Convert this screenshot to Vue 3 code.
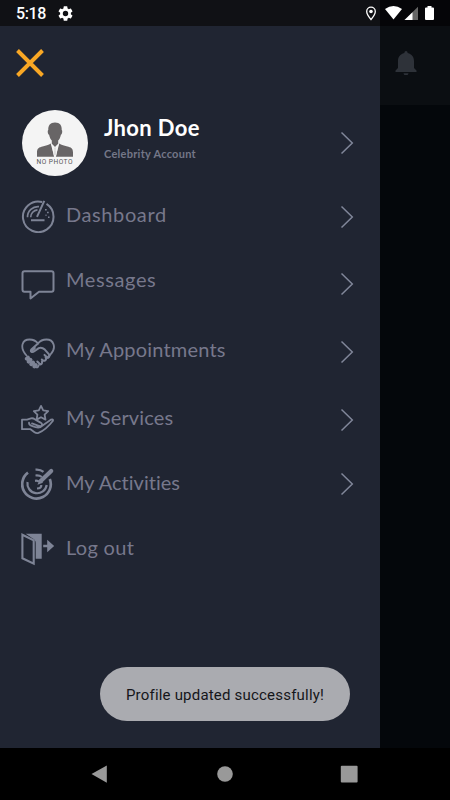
<script setup>
const items = [
  { id: 'dashboard', label: 'Dashboard' },
  { id: 'messages', label: 'Messages' },
  { id: 'appointments', label: 'My Appointments' },
  { id: 'services', label: 'My Services' },
  { id: 'activities', label: 'My Activities' },
  { id: 'logout', label: 'Log out' }
]
</script>

<template>
  <div class="screen">
    <header class="status">
      <div class="status-left">
        <span class="time">5:18</span>
        <svg class="gear" viewBox="2 2 20 20"><path fill="#fff" fill-rule="evenodd" d="M19.14 12.94c.04-.3.06-.61.06-.94s-.02-.64-.07-.94l2.03-1.58a.49.49 0 0 0 .12-.61l-1.92-3.32a.49.49 0 0 0-.59-.22l-2.39.96a7 7 0 0 0-1.62-.94l-.36-2.54A.48.48 0 0 0 13.92 2.4h-3.84a.48.48 0 0 0-.47.41l-.36 2.54c-.59.24-1.13.57-1.62.94l-2.39-.96a.48.48 0 0 0-.59.22L2.74 8.87a.48.48 0 0 0 .12.61l2.03 1.58a6 6 0 0 0 0 1.88l-2.03 1.58a.49.49 0 0 0-.12.61l1.92 3.32c.12.22.37.29.59.22l2.39-.96c.5.38 1.03.7 1.62.94l.36 2.54c.05.24.24.41.48.41h3.84c.24 0 .44-.17.47-.41l.36-2.54c.59-.24 1.13-.56 1.62-.94l2.39.96c.22.08.47 0 .59-.22l1.92-3.32a.48.48 0 0 0-.12-.61zM12 15.6a3.6 3.6 0 1 1 0-7.2 3.6 3.6 0 0 1 0 7.2z"/></svg>
      </div>
      <svg class="signals" viewBox="0 0 72 16">
        <path d="M6 1.2a4.3 4.3 0 0 0-4.3 4.3C1.7 8.6 6 13.5 6 13.5s4.3-4.9 4.3-8A4.3 4.3 0 0 0 6 1.2z" fill="none" stroke="#fff" stroke-width="1.3"/>
        <circle cx="6" cy="5.5" r="1.8" fill="#fff"/>
        <path d="M20 3Q28.500-3 37 3L28.500 13.500z" fill="#fff"/>
        <path d="M53 .8V14H39.500z" fill="#666"/>
        <path d="M47.500 6.200V14H39.500z" fill="#fff"/>
        <path d="M62.500 0h4v1.500h1.500q1 0 1 1V13q0 1-1 1h-7q-1 0-1-1V2.500q0-1 1-1h1.500z" fill="#fff"/>
      </svg>
    </header>

    <main class="body">
      <aside class="drawer">
        <button class="close" aria-label="Close">
          <svg viewBox="0 0 28 28"><path d="M1.500 1.500l25 25M26.500 1.500l-25 25" stroke="#f9a825" stroke-width="3.900"/></svg>
        </button>

        <section class="profile">
          <svg class="avatar" viewBox="0 0 66 66">
            <circle cx="33" cy="33" r="33" fill="#f4f4f4"/>
            <path d="M33 12.500c-4.800 0-7 3-6.700 7.500-1 .4-.5 4.500.8 4.800.5 2.600 1.500 4.500 2.700 5.700v3.200L33 37l3.200-3.300v-3.200c1.300-1.200 2.200-3.100 2.700-5.700 1.300-.3 1.800-4.400.8-4.800.3-4.500-1.700-7.500-6.700-7.500z" fill="#686566"/>
            <path d="M28.700 33.500l3.600 13.200H15v-4c0-3.500 1-5 4.500-6 4-1.200 7.500-1.700 9.200-3.200zM37.300 33.500l-3.600 13.200H51v-4c0-3.500-1-5-4.500-6-4-1.200-7.500-1.700-9.200-3.200z" fill="#686566"/>
            <path d="M29.500 34l3.500 3.500 3.500-3.500-2.500 12.700h-2z" fill="#f4f4f4"/>
            <path d="M31.800 37.500h2.400l-.5 1.800.6 5-1.300 1-1.300-1 .6-5z" fill="#dedede"/>
            <text class="photo-text" x="14.500" y="54.400" textLength="36">NO PHOTO</text>
          </svg>
          <div class="person">
            <h1>Jhon Doe</h1>
            <p>Celebrity Account</p>
          </div>
          <svg class="chevron" viewBox="0 0 14 24"><path d="M1.500 1.500L12.300 12 1.500 22.500"/></svg>
        </section>

        <nav class="menu">
          <a v-for="item in items" :key="item.id" class="row" :class="item.id">
            <svg class="icon" viewBox="0 0 34 34">
              <g v-if="item.id === 'dashboard'" transform="translate(0 .8)">
                <path d="M21.200 2.200A15.300 15.300 0 1 0 25.500 4.100" stroke-width="2"/>
                <path d="M6.500 17.500A10.500 10.500 0 0 1 18 6.800M9.700 17.500A7.500 7.500 0 0 1 16.500 10" stroke-width="1.700"/>
                <path d="M23.300 1L16 17M10 20.500h13.500" stroke-width="2"/>
                <path d="M24 10h1.700M26 12.700h1.700M24.500 15.500h1M27 17.500h1.500" stroke-width="1.500"/>
              </g>
              <path v-else-if="item.id === 'messages'" d="M3.500 5.300h27Q32.500 5.300 32.500 7.300v16.500q0 2-2 2H18L9.500 32.500V25.800h-6q-2 0-2-2V7.300q0-2 2-2z" stroke-width="2" stroke-linejoin="round"/>
              <g v-else-if="item.id === 'appointments'" stroke-linecap="round" stroke-linejoin="round" transform="translate(0 2)">
                <path d="M5.500 18.500C-2 10 1.500 2.500 8.500 2.500c4 0 6.500 1.300 8.500 4 2-2.700 5-4 8.500-4 7 0 10.500 8 4 15l-2.500 2.500" stroke-width="1.800"/>
                <path d="M17 6.500l-6.700 6c-1.500 2.200 1 3.300 3 1.800l4.500-3.200q3-1.200 6 1.500l4 4.500q1.500 2.500-.8 3.800l-3.500-3M24.500 20q1.500 2-.4 3.500-1.700.8-3.300-1M21 24.500q.5 2.600-1.700 3l-3-3M17.500 28.500q-.5 2.800-3.300 1.300" stroke-width="2"/>
                <path d="M7 20.500l-1.300 1.200M9.600 22.800l-2 2M12.200 25.400l-2 1.900M14.800 28l-1.500 1.500" stroke-width="3.700"/>
                <path d="M10.500 14l3-3" stroke-width="2.500"/>
              </g>
              <g v-else-if="item.id === 'services'" stroke-linejoin="round" stroke-linecap="round" transform="translate(-.5 .7)">
                <path d="M20.500 3.200l2.200 4.500 5 .7-3.600 3.500.9 5-4.500-2.400-4.400 2.400.8-5-3.600-3.500 5-.7z" stroke-width="1.800"/>
                <path d="M1.500 26.500V17h5l4-1.300q2-.5 4 1l5.500 3.200q2.500 1.600 1 3-1 .9-3.500 0l-6-2.200M8.500 20q-.3 2.300 3.500 3.500 5 2 8 .9L30.300 17q2.700-1 2.200 1-3.500 4.500-7.200 7.700-3.500 3-7.300 4.500-2 .8-4-.7l-4-3H1.500" stroke-width="1.800"/>
              </g>
              <g v-else-if="item.id === 'activities'" transform="translate(-.5 .5)">
                <path d="M7.500 5.200A14.300 14.300 0 1 0 29.300 11.500" stroke-width="2.700"/>
                <path d="M7 14.500A9.700 9.700 0 1 0 26.200 17.500" stroke-width="2.200"/>
                <path d="M15 2.200q5-.4 8 2.200M15 8q4-.4 6.300 1.500M14.500 13.300q3-.4 4 1M16.500 21q4.500-.2 4.300-3.500" stroke-width="2.200"/>
                <path d="M30.700 3.500L20.500 13.300" stroke-width="4.200" stroke-linecap="round"/>
                <path class="solid" d="M19 11.800l3.500 3.400-5.500 2z"/>
              </g>
              <g v-else transform="translate(-.3 0)">
                <path class="solid" d="M5 1.800h16v25h-6V11q0-3-3-4.500z"/>
                <path d="M1.700 2.700l11.300 5.700v23.300L1.700 26.300z" stroke-width="2.100"/>
                <path d="M22.500 14h7" stroke-width="2.500"/>
                <path class="solid" d="M26.500 7.800l7 6.200-7 6.200z"/>
              </g>
            </svg>
            <span class="label">{{ item.label }}</span>
            <svg v-if="item.id !== 'logout'" class="chevron" viewBox="0 0 14 24"><path d="M1.500 1.500L12.300 12 1.500 22.500"/></svg>
          </a>
        </nav>
      </aside>

      <section class="behind">
        <div class="toolbar">
          <svg viewBox="0 0 22 24"><path d="M11 0q1.500 0 1.700 2c4.200 1 6.300 4.200 6.300 8v7l2.500 2.500V21H.5v-1.500L3 17v-7c0-3.800 2.100-7 6.300-8Q9.500 0 11 0zM8.500 22.300h5Q13 24.500 11 24.500t-2.500-2.200z" fill="#2e3239"/></svg>
        </div>
      </section>

      <div class="toast">Profile updated successfully!</div>
    </main>

    <footer class="navbar">
      <svg viewBox="0 0 18 18"><path d="M15.800.5v17.200L.5 9z"/></svg>
      <svg viewBox="0 0 18 18"><circle cx="9" cy="9" r="7.800"/></svg>
      <svg viewBox="0 0 18 18"><rect x=".8" y=".8" width="16.800" height="16.800" rx="1"/></svg>
    </footer>
  </div>
</template>

<style>
body {
  margin: 0;
  background: #000;
}
</style>

<style scoped>
.screen {
  width: 450px;
  height: 800px;
  display: flex;
  flex-direction: column;
  overflow: hidden;
  background: #000;
  font-family: Lato, "Open Sans", sans-serif;
}
svg {
  display: block;
  flex: none;
}
.status {
  height: 26px;
  flex: none;
  box-sizing: border-box;
  padding: 0 14px 0 16px;
  display: flex;
  justify-content: space-between;
  align-items: center;
  background: linear-gradient(90deg, #101115 380px, #050508 380px);
}
.status-left {
  display: flex;
  align-items: center;
  gap: 12px;
}
.time {
  color: #fff;
  font: 500 16px/26px Roboto, sans-serif;
  letter-spacing: -0.35px;
  padding-top: 2px;
}
.gear {
  width: 15px;
  height: 15px;
}
.signals {
  width: 72px;
  height: 16px;
  margin-top: 2px;
  margin-right: -1px;
}
.body {
  position: relative;
  height: 722px;
  display: flex;
}
.drawer {
  width: 380px;
  background: #202532;
}
.behind {
  flex: 1;
  background: #04070b;
}
.toolbar {
  height: 79px;
  box-sizing: border-box;
  background: #0b0e12;
  padding: 25px 0 0 15px;
}
.toolbar svg {
  width: 22px;
  height: 24px;
}
.close {
  display: block;
  border: 0;
  background: none;
  padding: 23px 0 0 16px;
}
.close svg {
  width: 28px;
  height: 28px;
}
.profile {
  display: flex;
  align-items: center;
  height: 66px;
  padding: 33px 26px 7px 22px;
}
.avatar {
  width: 66px;
  height: 66px;
}
.photo-text {
  font: 400 6.6px Roboto, sans-serif;
  fill: #585657;
}
.person {
  flex: 1;
  padding: 0 0 12px 16px;
}
h1 {
  margin: 0;
  font-size: 22px;
  line-height: 28px;
  font-weight: 700;
  letter-spacing: 0.35px;
  color: #fff;
}
p {
  margin: 5px 0 0;
  font-size: 11px;
  line-height: 14px;
  font-weight: 700;
  letter-spacing: 0.27px;
  color: #747788;
}
.chevron {
  width: 14px;
  height: 24px;
  fill: none;
  stroke: #81879a;
  stroke-width: 1.5;
}
.menu {
  display: grid;
  grid-template-rows: 67px 67px 70px 65px 64px 66px;
}
.row {
  display: flex;
  align-items: center;
  padding: 0 26px 0 21px;
}
.icon {
  width: 34px;
  height: 34px;
  margin-top: -1px;
  fill: none;
  stroke: #7e8496;
}
.solid {
  fill: #7e8496;
  stroke: none;
}
.label {
  flex: 1;
  padding: 0 0 5px 11px;
  font-size: 20px;
  line-height: 24px;
  font-weight: 400;
  letter-spacing: 0.6px;
  color: #77788c;
}
.messages .label {
  padding-bottom: 9px;
}
.appointments .label {
  padding-bottom: 7px;
  letter-spacing: 0.2px;
}
.services .label {
  letter-spacing: 0.15px;
}
.activities .label {
  padding-bottom: 4px;
  letter-spacing: 0.02px;
}
.logout .label {
  letter-spacing: 0.3px;
}
.toast {
  position: absolute;
  left: 100px;
  bottom: 27px;
  width: 250px;
  height: 54px;
  border-radius: 27px;
  background: #aaabb0;
  color: #15161a;
  font: 400 15px/57px Roboto, sans-serif;
  letter-spacing: 0.2px;
  text-align: center;
}
.navbar {
  height: 52px;
  box-sizing: border-box;
  padding: 0 92px 0 91px;
  display: flex;
  align-items: center;
  justify-content: space-between;
}
.navbar svg {
  width: 18px;
  height: 18px;
  fill: #999;
}
</style>
